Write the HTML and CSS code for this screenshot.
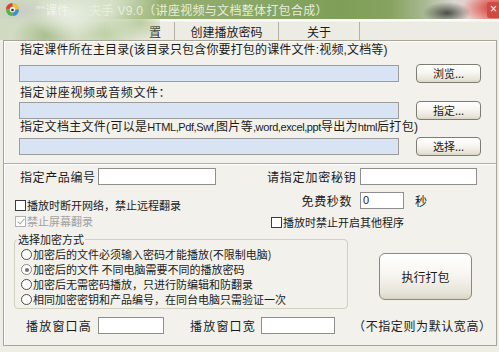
FILE: index.html
```html
<!DOCTYPE html>
<html lang="zh">
<head>
<meta charset="utf-8">
<title>课件打包</title>
<link rel="stylesheet" href="styles.css">
</head>
<body>
<div class="window">
  <div class="titlebar">
    <svg class="appicon" width="15" height="15" viewBox="0 0 16 16">
      <path d="M8 8 L8 1 A7 7 0 0 1 15 8 Z" fill="#e8c23a"/>
      <path d="M8 8 L15 8 A7 7 0 0 1 8 15 Z" fill="#3f8fd0"/>
      <path d="M8 8 L8 15 A7 7 0 0 1 1 8 Z" fill="#5bb04a"/>
      <path d="M8 8 L1 8 A7 7 0 0 1 8 1 Z" fill="#d9443a"/>
      <circle cx="8" cy="8" r="3" fill="#f3efe6"/>
      <circle cx="8" cy="8.5" r="1.4" fill="#3a2f2a"/>
    </svg>
    <span class="title-dim">''''课件</span>
    <span class="title-main">夫手 V9.0（讲座视频与文档整体打包合成）</span>
    <span class="close">×</span>
  </div>
  <div class="tabs">
    <div class="tab tab-1"></div>
    <div class="tab tab-2">置</div>
    <div class="tab tab-3">创建播放密码</div>
    <div class="tab tab-4">关于</div>
  </div>
  <div class="blot"></div>
  <div class="panel">
    <section class="files">
      <div class="flabel lab-1">指定课件所在主目录(该目录只包含你要打包的课件文件:视频,文档等)</div>
      <div class="frow"><div class="path"></div><button class="btn">浏览...</button></div>
      <div class="flabel lab-2">指定讲座视频或音频文件：</div>
      <div class="frow"><div class="path"></div><button class="btn">指定...</button></div>
      <div class="flabel lab-3">指定文档主文件(可以是<span class="lat">HTML,Pdf,Swf,</span>图片等<span class="lat">,word,excel,ppt</span>导出为<span class="lat">html</span>后打包)</div>
      <div class="frow frow-3"><div class="path"></div><button class="btn">选择...</button></div>
    </section>
    <section class="opts">
      <div class="row-a">
        <div class="col-l">
          <span class="lbl lbl-prod">指定产品编号</span><div class="box box-prod"></div>
        </div>
        <div class="col-r">
          <span class="lbl lbl-key">请指定加密秘钥</span><div class="box box-key"></div>
        </div>
      </div>
      <div class="row-b">
        <div class="col-l checks">
          <div class="check"><span class="cb"></span>播放时断开网络，禁止远程翻录</div>
          <div class="check disabled"><span class="cb on"></span>禁止屏幕翻录</div>
        </div>
        <div class="col-r">
          <div class="secs"><span class="lbl lbl-secs">免费秒数</span><div class="box box-secs">0</div><span class="lbl unit">秒</span></div>
          <div class="check check-r"><span class="cb"></span>播放时禁止开启其他程序</div>
        </div>
      </div>
      <div class="row-c">
        <fieldset class="group">
          <legend>选择加密方式</legend>
          <div class="radio"><span class="rb"></span>加密后的文件必须输入密码才能播放(不限制电脑)</div>
          <div class="radio"><span class="rb on"></span>加密后的文件 不同电脑需要不同的播放密码</div>
          <div class="radio"><span class="rb"></span>加密后无需密码播放，只进行防编辑和防翻录</div>
          <div class="radio"><span class="rb"></span>相同加密密钥和产品编号，在同台电脑只需验证一次</div>
        </fieldset>
        <button class="btn big">执行打包</button>
      </div>
      <div class="row-d">
        <span class="lbl lbl-h">播放窗口高</span><div class="box box-h"></div>
        <span class="lbl lbl-w">播放窗口宽</span><div class="box box-w"></div>
        <span class="lbl note">（不指定则为默认宽高）</span>
      </div>
    </section>
  </div>
</div>
</body>
</html>
```
FILE: styles.css
```css
* { box-sizing: border-box; }
html, body { margin: 0; padding: 0; }
body {
  width: 499px;
  height: 352px;
  overflow: hidden;
  background: #eeede6;
  font-family: "Liberation Sans", "Noto Sans CJK SC", sans-serif;
  color: #1b1b1b;
}
.window {
  position: relative;
  width: 499px;
  height: 352px;
}
.titlebar {
  position: relative;
  height: 19px;
  display: flex;
  align-items: center;
  background:
    radial-gradient(ellipse 24px 11px at 447px 13px, rgba(70,72,64,0.95), rgba(70,72,64,0) 100%),
    radial-gradient(ellipse 30px 16px at 492px 8px, rgba(214,70,62,1), rgba(214,70,62,0) 100%),
    linear-gradient(90deg, #cfd8c0 0%, #d9e2cc 10%, #b3c596 22%, #97b072 32%, #8aa766 50%, #7f9f58 68%, #86a35f 78%, #a7b890 85%, #d8d7cf 91%, #efc9c6 96%, #e89a94 100%);
  font-size: 12px;
  color: #e6eedb;
  overflow: hidden;
}
.appicon { margin-left: 5px; flex: none; position: relative; z-index: 2; }
.title-dim { margin-left: 16px; color: #f4f7ee; opacity: 0.8; position: relative; z-index: 2; }
.title-main { margin-left: 20px; position: relative; z-index: 2; letter-spacing: 0.3px; }
.close {
  position: absolute;
  right: -5px;
  top: 2px;
  width: 17px;
  height: 16px;
  border-radius: 3px;
  background: #d04a40;
  color: #fff;
  font-size: 12px;
  line-height: 15px;
  text-align: left;
  padding-left: 3px;
}
.tabs {
  height: 21px;
  display: flex;
  align-items: stretch;
  background: linear-gradient(#fbfbf8 0, #fbfbf8 2px, #ecebe4 3px, #ecebe4 100%);
  font-size: 12px;
  font-family: "Noto Sans CJK SC", sans-serif;
}
.tab {
  border-right: 1px solid #b3b2a5;
  margin-top: 3px;
  line-height: 19px;
  text-align: center;
}
.tab-1 { width: 105px; }
.tab-2 { width: 70px; text-align: right; padding-right: 13px; }
.tab-3 { width: 104px; }
.tab-4 { width: 81px; }
.blot {
  position: absolute;
  left: 0;
  top: 0;
  width: 160px;
  height: 40px;
  pointer-events: none;
  background:
    radial-gradient(ellipse 28px 14px at 22px 11px, rgba(200,205,196,0.9), rgba(200,205,196,0) 100%),
    radial-gradient(ellipse 40px 24px at 70px 14px, rgba(232,238,225,1), rgba(232,238,225,0) 100%),
    radial-gradient(ellipse 32px 22px at 45px 36px, rgba(168,190,140,0.95), rgba(168,190,140,0) 100%),
    radial-gradient(ellipse 35px 20px at 105px 34px, rgba(190,208,166,0.95), rgba(190,208,166,0) 100%),
    radial-gradient(ellipse 30px 20px at 140px 22px, rgba(160,186,120,0.6), rgba(160,186,120,0) 100%),
    linear-gradient(90deg, rgba(205,215,190,0.9) 0%, rgba(216,226,204,0.9) 70%, rgba(216,226,204,0) 100%);
}
.panel {
  margin: 0 2px 0 3px;
  height: 306px;
  border: 1px solid #a6a598;
  background: #f2f1eb;
  box-shadow: inset 1px 1px 0 #ffffff;
}
.files {
  padding: 2px 0 7px 15px;
  border-bottom: 1px solid #b1b0a4;
  box-shadow: 0 1px 0 #ffffff;
}
.flabel {
  font-size: 12px;
  line-height: 14px;
  height: 14px;
  white-space: nowrap;
  padding-left: 1px;
}
.lab-1 { letter-spacing: 0.15px; }
.lab-2 { margin-top: 3px; letter-spacing: 0.6px; }
.lab-3 { letter-spacing: 0.3px; }
.lat { font-size: 11px; letter-spacing: -0.4px; }
.frow {
  display: flex;
  align-items: center;
  height: 20px;
}
.files .frow:nth-child(2) { margin-top: 6px; }
.frow-3 { margin-top: 2px; }
.path {
  width: 380px;
  height: 17px;
  background: #d8e3f3;
  border: 1px solid #9c9c9c;
}
.btn {
  font-family: "Noto Sans CJK SC", sans-serif;
  font-size: 11px;
  color: #1b1b1b;
  width: 65px;
  height: 19px;
  margin-left: 17px;
  padding: 0;
  border: 1px solid #7e7d74;
  border-radius: 4px;
  background: linear-gradient(#ffffff 0%, #f7f6f1 45%, #e7e4d8 85%, #d9d5c6 100%);
  line-height: 16px;
}
.opts { padding-top: 4px; }
.lbl { font-size: 12px; line-height: 17px; white-space: nowrap; font-family: "Noto Sans CJK SC", sans-serif; }
.box {
  height: 17px;
  background: #ffffff;
  border: 1px solid #8e8e8e;
  font-size: 11px;
  line-height: 14px;
  padding-left: 2px;
}
.row-a { display: flex; height: 17px; }
.col-l { width: 263px; flex: none; }
.row-a .col-l { display: flex; padding-left: 16px; }
.row-a .col-r { display: flex; }
.lbl-prod { width: 78px; letter-spacing: 0.6px; }
.box-prod { width: 118px; }
.lbl-key { width: 93px; letter-spacing: 0.8px; }
.box-key { width: 117px; }
.row-b { display: flex; margin-top: 5px; height: 40px; }
.checks { padding-top: 8px; padding-left: 11px; }
.check {
  display: flex;
  align-items: center;
  font-size: 11px;
  line-height: 14px;
  height: 14px;
  font-family: "Noto Sans CJK SC", sans-serif;
  white-space: nowrap;
}
.check.disabled { margin-top: 2px; color: #a2a2a2; }
.cb {
  width: 11px;
  height: 11px;
  border: 1px solid #3c3c3c;
  background: #fff;
  margin-right: 1px;
  position: relative;
  flex: none;
}
.disabled .cb { border-color: #b2b2b2; }
.cb.on::after {
  content: "";
  position: absolute;
  left: 3px;
  top: 0px;
  width: 3px;
  height: 6px;
  border: solid #a8a8a8;
  border-width: 0 1.5px 1.5px 0;
  transform: rotate(40deg);
}
.secs { display: flex; margin-top: 2px; height: 17px; }
.lbl-secs { width: 85px; text-align: right; letter-spacing: 0.6px; }
.box-secs { width: 44px; margin-left: 8px; }
.unit { margin-left: 11px; }
.check-r { margin-top: 6px; padding-left: 4px; }
.row-c { display: flex; align-items: flex-start; margin-top: 2px; }
.group {
  margin: 0 0 0 10px;
  width: 334px;
  height: 77px;
  padding: 0 0 0 6px;
  border: 1px solid #d0d0bf;
  border-radius: 4px;
  font-family: "Noto Sans CJK SC", sans-serif;
}
.group legend {
  font-size: 11px;
  line-height: 14px;
  padding: 0 1px;
  margin-left: -4px;
}
.radio {
  display: flex;
  align-items: center;
  height: 15px;
  font-size: 11px;
  line-height: 15px;
  white-space: nowrap;
}
.radio:first-of-type { margin-top: 1px; }
.rb {
  width: 11px;
  height: 11px;
  border-radius: 50%;
  border: 1px solid #4a4a4a;
  background: #fff;
  margin-right: 1px;
  position: relative;
  flex: none;
}
.rb.on { border-color: #8a8a8a; }
.rb.on::after {
  content: "";
  position: absolute;
  left: 2.5px;
  top: 2.5px;
  width: 4px;
  height: 4px;
  border-radius: 50%;
  background: #6f6f6f;
}
.btn.big {
  width: 93px;
  height: 47px;
  margin-left: 31px;
  margin-top: 21px;
  border-radius: 6px;
  font-size: 12px;
  border-color: #8a897f;
}
.row-d {
  display: flex;
  align-items: center;
  margin-top: 8px;
  height: 17px;
  padding-left: 22px;
}
.lbl-h, .lbl-w { letter-spacing: 1.2px; }
.box-h { width: 66px; margin-left: 6px; }
.lbl-w { margin-left: 26px; }
.box-w { width: 74px; margin-left: 5px; }
.note { margin-left: 18px; letter-spacing: 0.6px; }
```
